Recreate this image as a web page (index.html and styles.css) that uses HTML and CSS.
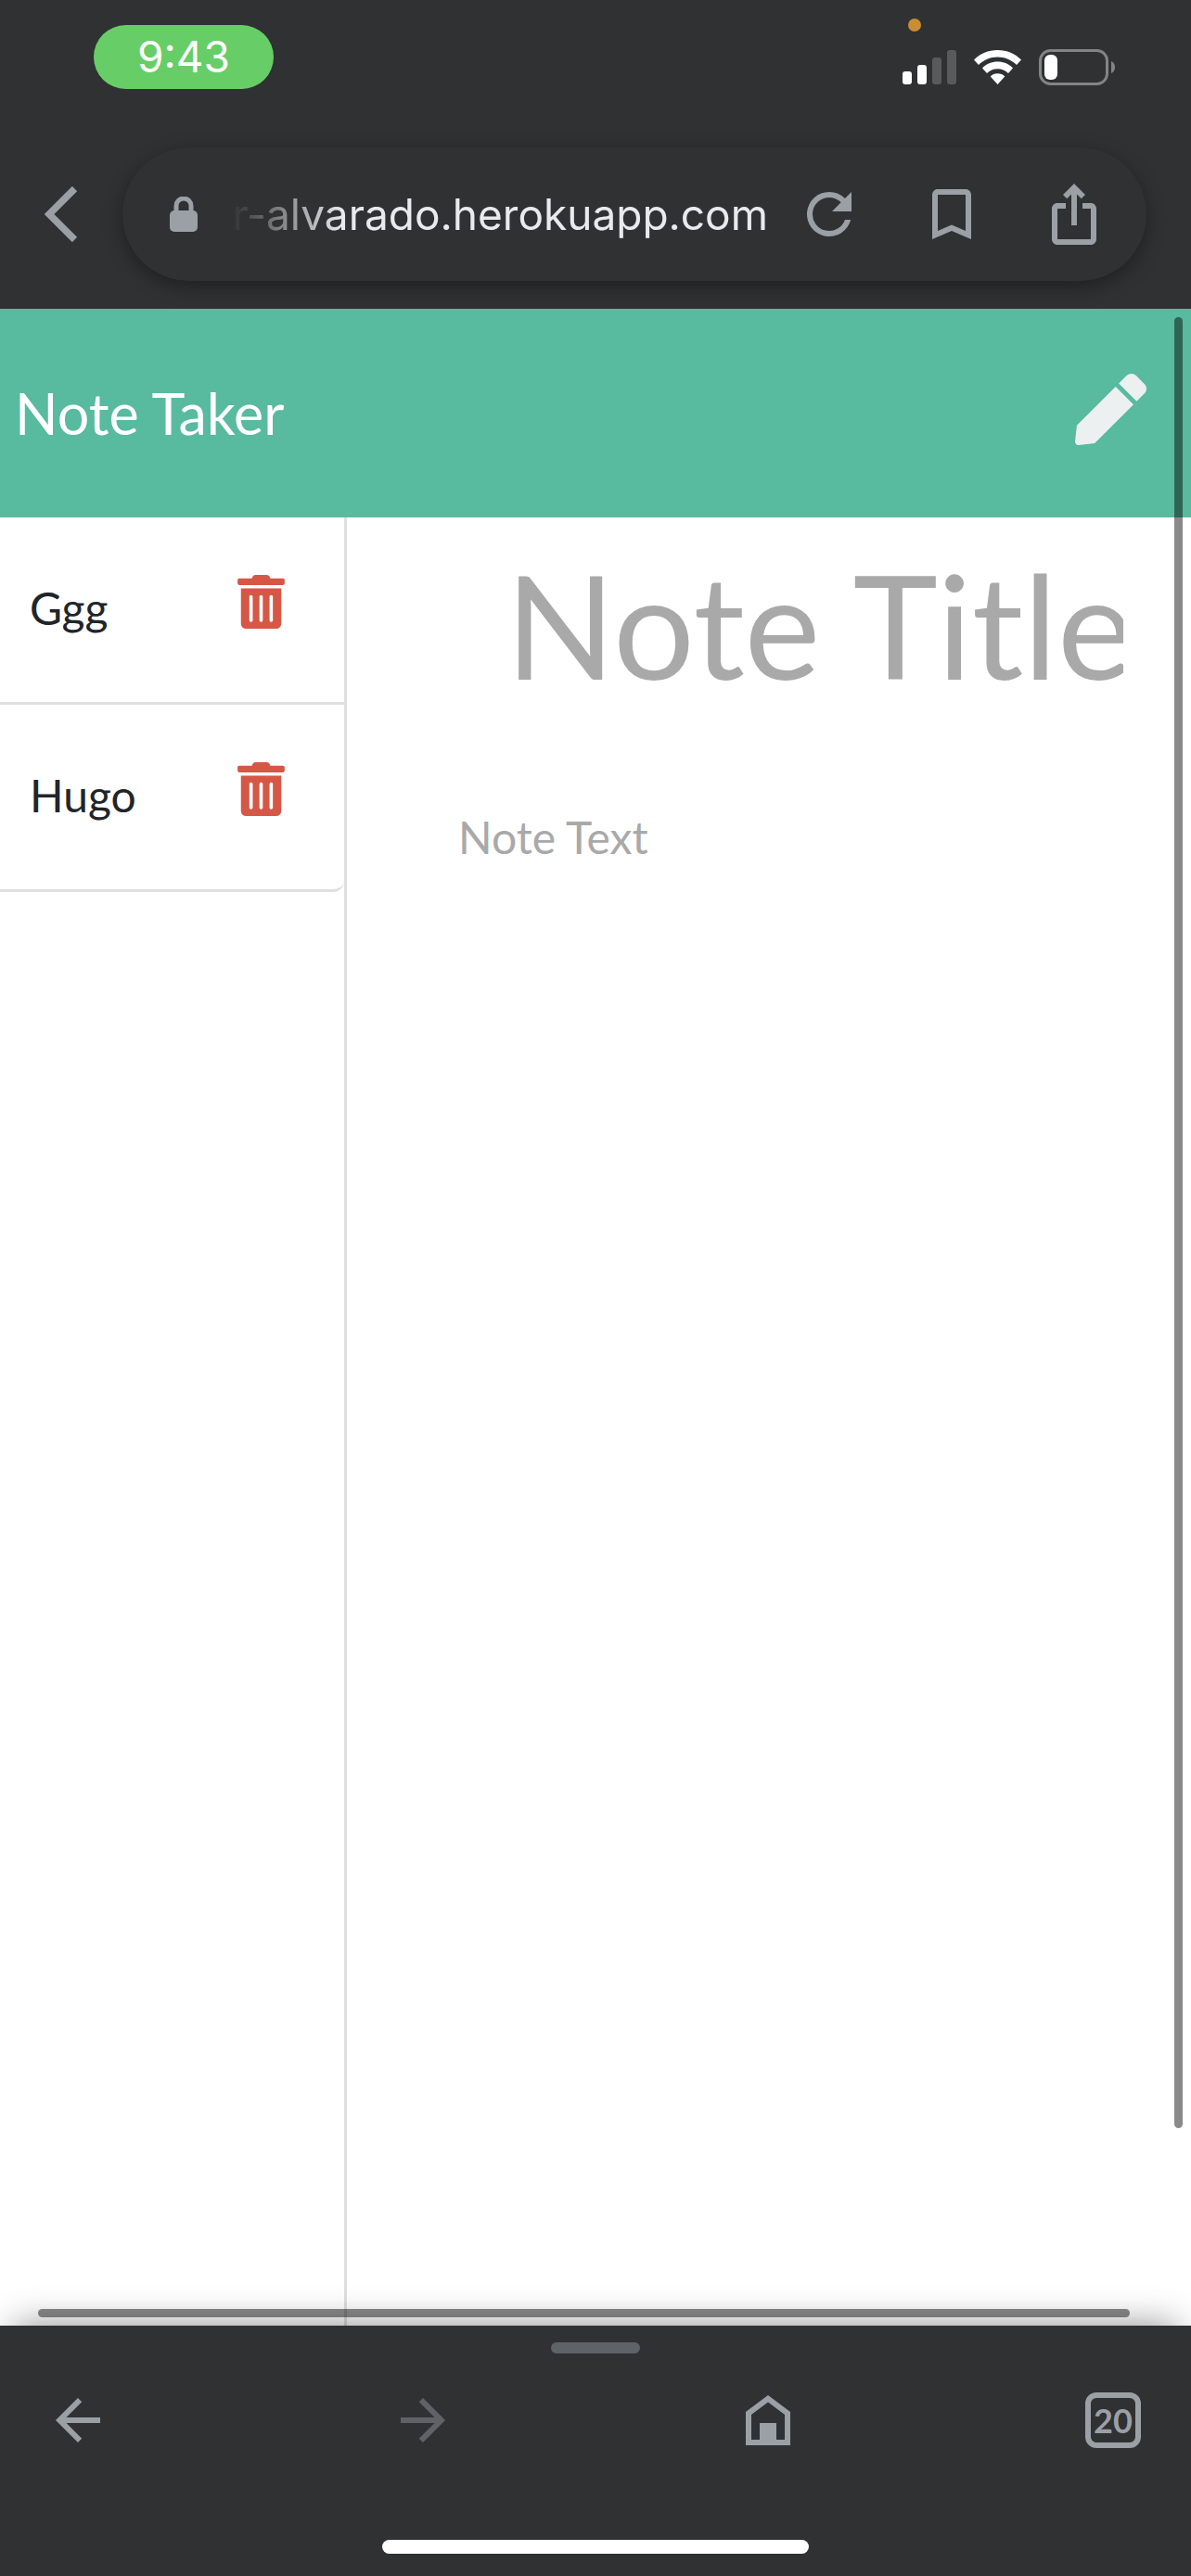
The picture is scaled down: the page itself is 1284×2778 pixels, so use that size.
FILE: index.html
```html
<!DOCTYPE html>
<html lang="en">
<head>
  <meta charset="utf-8">
  <meta name="viewport" content="width=device-width, initial-scale=1">
  <title>Note Taker</title>
  <link rel="stylesheet" href="styles.css">
</head>
<body>
  <div class="status-bar">
    <time class="clock">9:43</time>
    <div class="indicators">
      <span class="mic-dot"></span>
      <svg class="signal" viewBox="0 0 58 37" aria-hidden="true">
        <rect x="0" y="23" width="10" height="14" rx="3"/>
        <rect x="16" y="16" width="10" height="21" rx="3"/>
        <rect x="32" y="8" width="10" height="29" rx="3" opacity=".2"/>
        <rect x="48" y="0" width="10" height="37" rx="3" opacity=".2"/>
      </svg>
      <svg class="wifi" viewBox="0 0 51 37" aria-hidden="true">
        <path d="M25.500 0C35.500 0 44.500 4 51 10.500L46 16C40.500 10.600 33.500 7.500 25.500 7.500S10.500 10.600 5 16L0 10.500C6.500 4 15.500 0 25.500 0Z"/>
        <path d="M25.500 12.600C32 12.600 37.800 15.200 42 19.500L37 25C34 22 30 20.200 25.500 20.200S17 22 14 25L9 19.500C13.200 15.200 19 12.600 25.500 12.600Z"/>
        <path d="M25.500 25.200C28.600 25.200 31.300 26.400 33.300 28.400L25.500 37L17.700 28.400C19.700 26.400 22.400 25.200 25.500 25.200Z"/>
      </svg>
      <svg class="battery" viewBox="0 0 82 39" aria-hidden="true">
        <rect x="1.500" y="1.500" width="72" height="36" rx="11" fill="none" stroke="#838485" stroke-width="3"/>
        <rect x="6" y="6" width="14" height="27" rx="6"/>
        <path d="M78 13C80.500 14 82 16.500 82 19.500S80.500 25 78 26Z" fill="#838485"/>
      </svg>
    </div>
  </div>

  <div class="address-row">
    <button class="plain chevron" type="button" aria-label="Back">
      <svg viewBox="0 0 36 60"><path d="M32.500 2.500L5 30L32.500 57.500" fill="none" stroke="currentColor" stroke-width="7.500"/></svg>
    </button>
    <div class="address-bar">
      <svg class="lock" viewBox="0 0 30 38" aria-hidden="true">
        <rect y="15" width="30" height="23" rx="5"/>
        <path d="M7 17V10a8 8 0 0 1 16 0V17" fill="none" stroke="currentColor" stroke-width="5"/>
      </svg>
      <input class="url" type="text" aria-label="Address" value="r-alvarado.herokuapp.com">
      <button class="plain tool" type="button" aria-label="Reload">
        <svg class="icon" viewBox="0 0 24 24"><path d="M17.650 6.350A7.958 7.958 0 0 0 12 4a8 8 0 1 0 7.730 10h-2.080A6 6 0 1 1 12 6c1.660 0 3.140.69 4.220 1.780L13 11h7V4l-2.350 2.350z"/></svg>
      </button>
      <button class="plain tool" type="button" aria-label="Bookmark">
        <svg class="icon" viewBox="0 0 24 24"><path d="M17 3H7c-1.100 0-2 .9-2 2v16l7-3 7 3V5c0-1.100-.9-2-2-2zm0 15l-5-2.180L7 18V5h10v13z"/></svg>
      </button>
      <button class="plain tool" type="button" aria-label="Share">
        <svg class="icon" viewBox="0 0 24 24"><path d="M16 5l-1.420 1.420-1.590-1.590V16h-1.980V4.830L9.420 6.420 8 5l4-4 4 4zm4 5v11c0 1.100-.9 2-2 2H6c-1.110 0-2-.9-2-2V10c0-1.110.89-2 2-2h3v2H6v11h12V10h-3V8h3c1.100 0 2 .89 2 2z"/></svg>
      </button>
    </div>
  </div>

  <div class="page">
    <header class="navbar">
      <a class="brand" href="#">Note Taker</a>
      <button class="plain" type="button" aria-label="New note">
        <svg class="pen" viewBox="0 0 512 512"><path d="M290.740 93.240l128.020 128.020-277.990 277.990-114.140 12.600C11.350 513.540-1.560 500.620.14 485.340l12.700-114.220 277.900-277.880zm207.200-19.060l-60.110-60.110c-18.750-18.750-49.160-18.750-67.910 0l-56.550 56.550 128.020 128.020 56.550-56.550c18.750-18.760 18.750-49.160 0-67.910z"/></svg>
      </button>
    </header>
    <main class="content">
      <aside class="sidebar">
        <ul class="notes">
          <li class="note">
            <span>Ggg</span>
            <button class="plain delete" type="button" aria-label="Delete Ggg">
              <svg class="trash" viewBox="0 0 448 512"><path d="M32 464a48 48 0 0 0 48 48h288a48 48 0 0 0 48-48V128H32zm272-256a16 16 0 0 1 32 0v224a16 16 0 0 1-32 0zm-96 0a16 16 0 0 1 32 0v224a16 16 0 0 1-32 0zm-96 0a16 16 0 0 1 32 0v224a16 16 0 0 1-32 0zM432 32H312l-9.400-18.700A24 24 0 0 0 281.100 0H166.800a23.720 23.720 0 0 0-21.400 13.300L136 32H16A16 16 0 0 0 0 48v32a16 16 0 0 0 16 16h416a16 16 0 0 0 16-16V48a16 16 0 0 0-16-16z"/></svg>
            </button>
          </li>
          <li class="note">
            <span>Hugo</span>
            <button class="plain delete" type="button" aria-label="Delete Hugo">
              <svg class="trash" viewBox="0 0 448 512"><path d="M32 464a48 48 0 0 0 48 48h288a48 48 0 0 0 48-48V128H32zm272-256a16 16 0 0 1 32 0v224a16 16 0 0 1-32 0zm-96 0a16 16 0 0 1 32 0v224a16 16 0 0 1-32 0zm-96 0a16 16 0 0 1 32 0v224a16 16 0 0 1-32 0zM432 32H312l-9.400-18.700A24 24 0 0 0 281.100 0H166.800a23.720 23.720 0 0 0-21.400 13.300L136 32H16A16 16 0 0 0 0 48v32a16 16 0 0 0 16 16h416a16 16 0 0 0 16-16V48a16 16 0 0 0-16-16z"/></svg>
            </button>
          </li>
        </ul>
      </aside>
      <section class="editor">
        <input class="note-title" type="text" placeholder="Note Title" aria-label="Note Title">
        <textarea class="note-text" placeholder="Note Text" aria-label="Note Text"></textarea>
      </section>
    </main>
    <div class="scroll-y"></div>
    <div class="scroll-x"></div>
  </div>

  <footer class="bottom-bar">
    <span class="grabber"></span>
    <nav class="actions">
      <button class="plain" type="button" aria-label="Previous page">
        <svg class="icon" viewBox="0 0 24 24"><path d="M20 11H7.830l5.590-5.590L12 4l-8 8 8 8 1.410-1.410L7.830 13H20z"/></svg>
      </button>
      <button class="plain" type="button" aria-label="Next page" disabled>
        <svg class="icon" viewBox="0 0 24 24"><path d="M4 11H16.170l-5.590-5.590L12 4l8 8-8 8-1.410-1.410L16.170 13H4z"/></svg>
      </button>
      <button class="plain" type="button" aria-label="Home">
        <svg class="icon" viewBox="0 0 24 24"><path d="M12 3L20 9V21H4V9zM12 5.500L6 10V19H9V13H15V19H18V10z" fill-rule="evenodd"/></svg>
      </button>
      <button class="plain tabs" type="button" aria-label="20 open tabs"><span class="tab-count">20</span></button>
    </nav>
    <span class="home-indicator"></span>
  </footer>
</body>
</html>
```
FILE: styles.css
```css
:root {
  --chrome: #303133;
  --icon: #9aa0a6;
  --muted: #5f6368;
  --line: #dfdfdf;
  --scroll: rgba(0, 0, 0, 0.46);
}

*, *::before, *::after { box-sizing: border-box; }

body {
  display: flex;
  flex-direction: column;
  min-height: 100vh;
  margin: 0;
  background: var(--chrome);
  font-family: Lato, "Liberation Sans", sans-serif;
  font-size: 48px;
}

svg { display: block; fill: currentColor; }

.plain {
  display: flex;
  align-items: center;
  justify-content: center;
  padding: 0;
  border: 0;
  background: none;
  color: var(--icon);
}
.plain:disabled { color: var(--muted); }
.icon { width: 72px; height: 72px; }

/* Status bar */
.status-bar {
  display: flex;
  justify-content: space-between;
  align-items: flex-start;
  padding: 27px 82px 0 101px;
  color: #fff;
}
.clock {
  width: 194px;
  border-radius: 35px;
  background: #67ce67;
  font-family: Inter, sans-serif;
  font-size: 46px;
  line-height: 69px;
  text-align: center;
}
.indicators {
  position: relative;
  display: flex;
  align-items: center;
  gap: 19px;
  padding-top: 26px;
}
.mic-dot {
  position: absolute;
  top: -7px;
  left: 6px;
  width: 14px;
  height: 14px;
  border-radius: 50%;
  background: #c98d33;
}
.signal { width: 58px; height: 37px; }
.wifi { width: 51px; height: 37px; }
.battery { width: 82px; height: 39px; }

/* Address bar */
.address-row {
  display: flex;
  align-items: center;
  gap: 48px;
  padding: 63px 48px 30px;
}
.chevron svg { width: 36px; height: 60px; }
.address-bar {
  display: flex;
  flex: 1;
  align-items: center;
  min-width: 0;
  height: 144px;
  padding: 0 12px 0 51px;
  border-radius: 72px;
  background: var(--chrome);
  box-shadow: 0 6px 20px rgba(0, 0, 0, 0.35);
  color: var(--icon);
}
.lock { flex: none; width: 30px; height: 38px; }
.url {
  flex: 1;
  min-width: 0;
  margin: 0 0 0 36px;
  padding: 0;
  border: 0;
  background: none;
  color: #e8eaed;
  font-family: Inter, sans-serif;
  font-size: 46px;
  line-height: 72px;
  text-align: right;
  -webkit-mask-image: linear-gradient(90deg, transparent, #000 120px);
  mask-image: linear-gradient(90deg, transparent, #000 120px);
}
.tool { width: 132px; height: 144px; }

/* Web page */
.page {
  position: relative;
  display: flex;
  flex: 1;
  flex-direction: column;
  background: #fff;
}
.navbar {
  display: flex;
  justify-content: space-between;
  align-items: flex-start;
  padding: 70px 48px 70px 16px;
  background: #58ba9f;
}
.brand {
  color: #fff;
  font-size: 61px;
  line-height: 85px;
  text-decoration: none;
}
.navbar .plain { color: #ecf0f1; }
.pen { width: 77px; height: 77px; }

.content { display: flex; flex: 1; }
.sidebar {
  flex: 0 0 374px;
  border-right: 3px solid var(--line);
}
.notes { margin: 0; padding: 0; list-style: none; }
.note {
  display: flex;
  justify-content: space-between;
  align-items: flex-start;
  padding: 62px 64px 65px 32px;
  border-bottom: 3px solid var(--line);
  color: #212529;
  line-height: 72px;
}
.note:last-child { border-bottom-right-radius: 12px; }
.note .delete { color: #d65745; }
.trash { width: 51px; height: 58px; }

.editor {
  display: flex;
  flex: 1;
  flex-direction: column;
  gap: 102px;
  min-width: 0;
  padding: 22px 73px 60px 120px;
}
.note-title, .note-text {
  width: 100%;
  padding: 0;
  border: 0;
  outline: 0;
  background: none;
  color: #212529;
  font-family: inherit;
}
.note-title {
  height: 185px;
  padding-left: 51px;
  font-size: 155px;
}
.note-text {
  flex: 1;
  font-size: 48px;
  line-height: 72px;
  resize: none;
}
.note-title::placeholder, .note-text::placeholder { color: #a9a9a9; opacity: 1; }

.scroll-y, .scroll-x {
  position: absolute;
  border-radius: 5px;
  background: var(--scroll);
}
.scroll-y { top: 9px; right: 9px; bottom: 213px; width: 9px; }
.scroll-x { right: 66px; bottom: 9px; left: 41px; height: 9px; }

/* Browser toolbar */
.bottom-bar {
  position: relative;
  display: flex;
  flex-direction: column;
  align-items: center;
  padding: 18px 0 24px;
  background: var(--chrome);
  box-shadow: 0 -16px 36px -16px rgba(0, 0, 0, 0.45);
}
.grabber {
  width: 96px;
  height: 12px;
  border-radius: 6px;
  background: var(--muted);
}
.actions {
  display: flex;
  justify-content: space-between;
  align-self: stretch;
  padding: 36px 48px 93px;
}
.tabs { width: 72px; height: 72px; }
.tab-count {
  width: 60px;
  height: 60px;
  border: 6px solid var(--icon);
  border-radius: 12px;
  font-family: Lato, sans-serif;
  font-size: 36px;
  font-weight: 700;
  line-height: 48px;
  text-align: center;
}
.home-indicator {
  width: 460px;
  height: 15px;
  border-radius: 8px;
  background: #fff;
}
```
